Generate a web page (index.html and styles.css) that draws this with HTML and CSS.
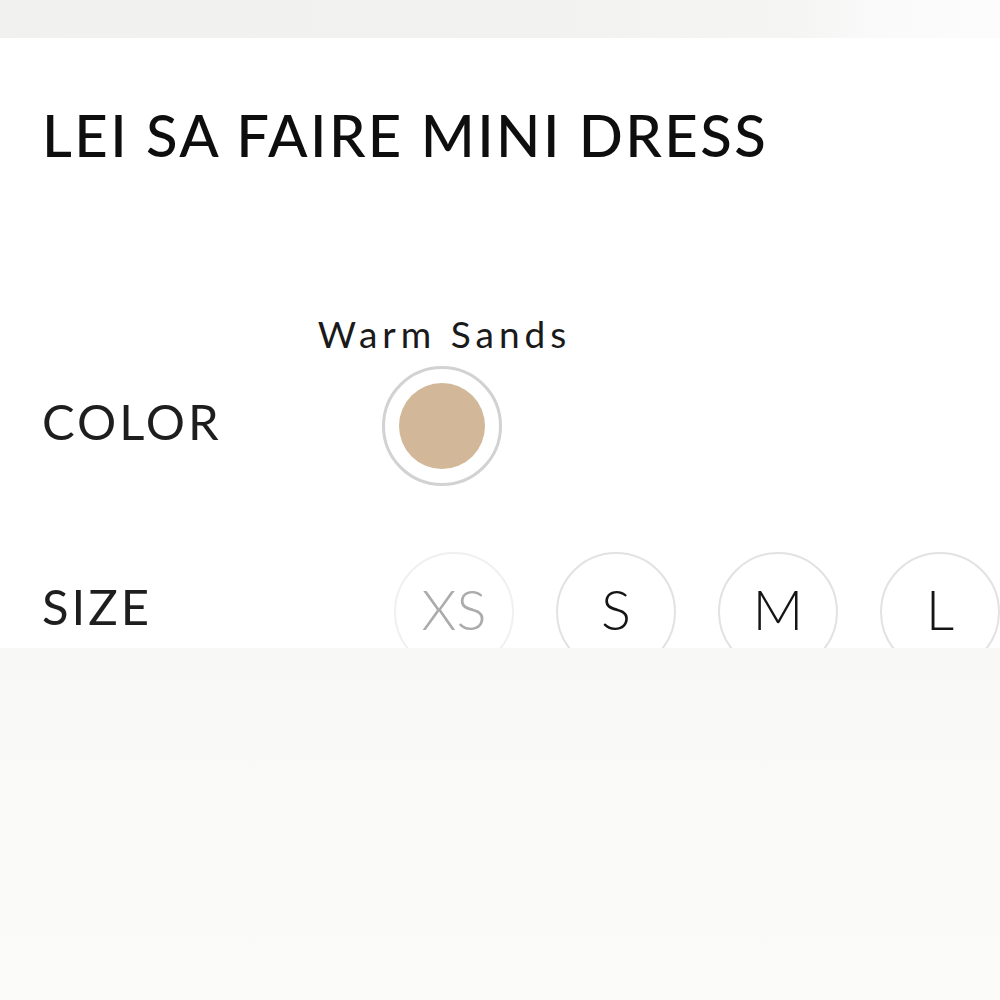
FILE: index.html
```html
<!DOCTYPE html>
<html>
<head>
<meta charset="utf-8">
<link rel="stylesheet" href="styles.css">
</head>
<body>
<div class="top-band"></div>
<main class="panel">
  <h1 class="title">LEI SA FAIRE MINI DRESS</h1>
  <div class="row color-row">
    <div class="label">COLOR</div>
    <div class="swatch-col">
      <div class="swatch-name">Warm Sands</div>
      <div class="swatch-ring"><div class="swatch-fill"></div></div>
    </div>
  </div>
  <div class="row size-row">
    <div class="label">SIZE</div>
    <div class="sizes">
      <div class="size disabled">XS</div>
      <div class="size">S</div>
      <div class="size">M</div>
      <div class="size">L</div>
    </div>
  </div>
</main>
<div class="bottom-band"></div>
</body>
</html>
```
FILE: styles.css
```css
html, body {
  margin: 0;
  padding: 0;
  background: #ffffff;
}
body {
  width: 1000px;
  height: 1000px;
  overflow: hidden;
  font-family: Lato, "Noto Sans", sans-serif;
  color: #111;
}
.top-band {
  height: 38px;
  background: linear-gradient(90deg, #f1f1f0 0%, #f2f2f1 55%, #f5f5f4 80%, #fafafa 88%, #fcfcfc 100%);
}
.panel {
  height: 610px;
  box-sizing: border-box;
  padding-left: 42px;
  overflow: hidden;
  background: #ffffff;
}
.title {
  margin: 0;
  padding-top: 68px;
  font-size: 58px;
  font-weight: 500;
  line-height: 1;
  letter-spacing: 2.4px;
  color: #0e0e0e;
}
.row {
  display: flex;
  align-items: flex-end;
}
.label {
  width: 274px;
  font-size: 49px;
  font-weight: 400;
  letter-spacing: 3px;
  color: #1e1e1e;
  line-height: 1;
}
.color-row {
  margin-top: 151px;
}
.color-row .label {
  padding-bottom: 40px;
}
.swatch-col {
  display: flex;
  flex-direction: column;
  align-items: center;
  width: 252px;
}
.swatch-name {
  font-size: 37px;
  font-weight: 400;
  letter-spacing: 5px;
  margin-right: -5px;
  color: #1a1a1a;
  line-height: 1;
  margin-bottom: 14px;
}
.swatch-ring {
  width: 120px;
  height: 120px;
  box-sizing: border-box;
  border: 3px solid #d2d2d2;
  border-radius: 50%;
  display: flex;
  align-items: center;
  justify-content: center;
}
.swatch-fill {
  width: 86px;
  height: 86px;
  border-radius: 50%;
  background: #d2b898;
}
.size-row {
  margin-top: 66px;
  align-items: flex-start;
}
.size-row .label {
  padding-top: 30px;
  width: 354px;
}
.sizes {
  display: flex;
  gap: 42px;
}
.size {
  flex: none;
  width: 120px;
  height: 120px;
  box-sizing: border-box;
  border: 2px solid #e2e2e2;
  border-radius: 50%;
  display: flex;
  align-items: center;
  justify-content: center;
  font-size: 56px;
  font-weight: 300;
  color: #151515;
  padding-bottom: 8px;
}
.size.disabled {
  color: #ababab;
  border-color: #f0f0f0;
}
.bottom-band {
  height: 352px;
  background: linear-gradient(180deg, #f8f8f7 0%, #fafaf9 60%, #fbfbfa 100%);
}
```
